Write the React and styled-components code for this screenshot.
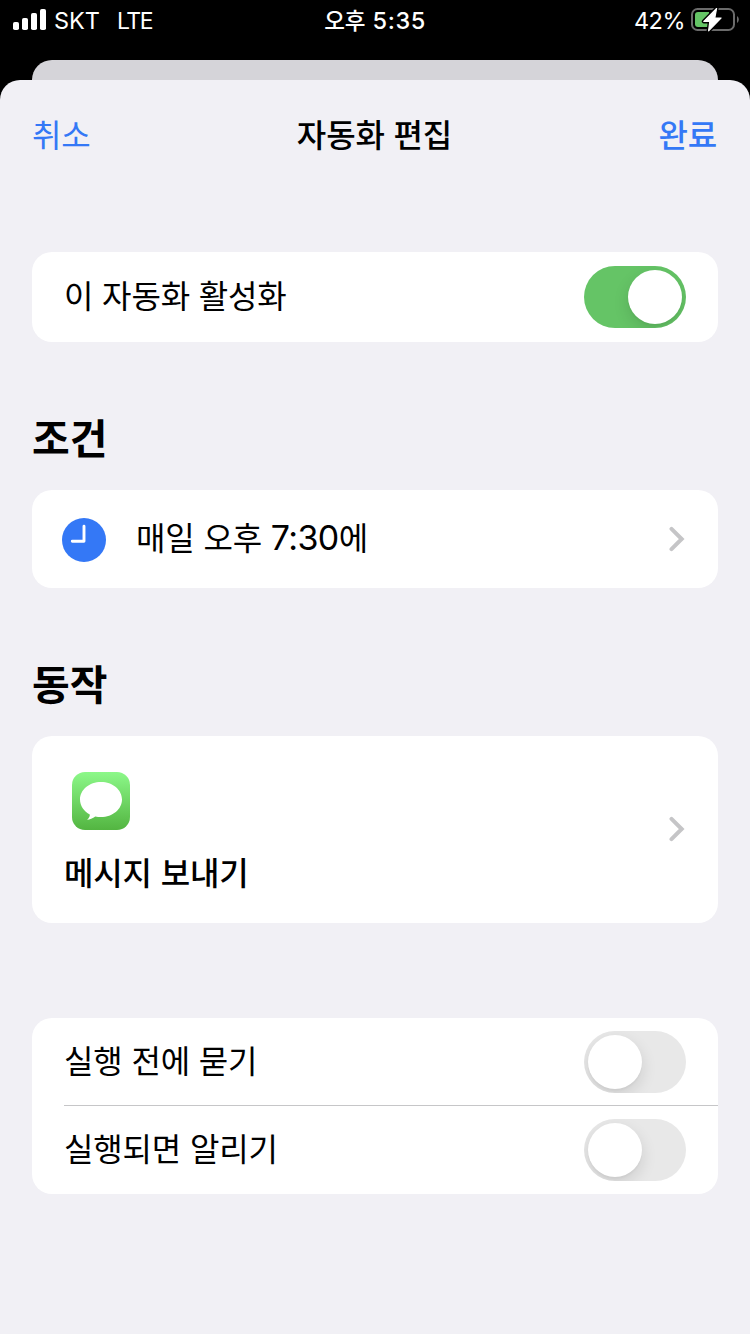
import { useState } from "react";
import styled, { createGlobalStyle, ThemeProvider } from "styled-components";

const theme = {
  colors: {
    blue: "#3478f6",
    green: "#65c466",
    background: "#f1f0f5",
    behind: "#d5d4d9",
    chevron: "#c5c5c7",
    separator: "#c6c6c8",
    track: "#e8e8e8",
  },
  fonts: {
    korean: `"Noto Sans CJK KR", sans-serif`,
    latin: `Inter, "Noto Sans CJK KR", sans-serif`,
  },
};

export default function App() {
  const [enabled, setEnabled] = useState(true);
  const [askBefore, setAskBefore] = useState(false);
  const [notify, setNotify] = useState(false);

  return (
    <ThemeProvider theme={theme}>
      <GlobalStyle />
      <Screen lang="ko">
        <StatusBar>
          <Carrier>
            <SignalIcon />
            <span>SKT</span>
            <Network>LTE</Network>
          </Carrier>
          <Clock>
            <ClockPeriod>오후</ClockPeriod>5:35
          </Clock>
          <Battery>
            <Percent>42%</Percent>
            <BatteryIcon />
          </Battery>
        </StatusBar>
        <BackSheet />
        <Sheet>
          <NavBar>
            <NavButton>취소</NavButton>
            <NavTitle>자동화 편집</NavTitle>
            <NavButton $bold>완료</NavButton>
          </NavBar>
          <Card>
            <Row $height={90}>
              <Label>이 자동화 활성화</Label>
              <Toggle checked={enabled} onChange={setEnabled} />
            </Row>
          </Card>

          <SectionTitle>조건</SectionTitle>
          <Card>
            <Row $height={98} $left={30}>
              <ClockIcon />
              <Label>
                매일 오후 <Digits>7:30</Digits>에
              </Label>
              <Chevron />
            </Row>
          </Card>

          <SectionTitle>동작</SectionTitle>
          <Card>
            <Row $height={187}>
              <Action>
                <MessagesIcon />
                <ActionName>메시지 보내기</ActionName>
              </Action>
              <Chevron />
            </Row>
          </Card>

          <Options>
            <Row $height={87}>
              <Label>실행 전에 묻기</Label>
              <Toggle checked={askBefore} onChange={setAskBefore} />
            </Row>
            <Separator />
            <Row $height={88}>
              <Label>실행되면 알리기</Label>
              <Toggle checked={notify} onChange={setNotify} />
            </Row>
          </Options>
        </Sheet>
      </Screen>
    </ThemeProvider>
  );
}

function Toggle({ checked, onChange }) {
  return (
    <Track type="button" role="switch" aria-checked={checked} $on={checked} onClick={() => onChange(!checked)}>
      <Knob />
    </Track>
  );
}

function SignalIcon() {
  return (
    <SignalSvg width="33" height="21" viewBox="0 0 33 21" fill="#fff">
      <rect x="0" y="13" width="6" height="8" rx="1.8" />
      <rect x="9" y="9" width="6" height="12" rx="1.8" />
      <rect x="18" y="4" width="6" height="17" rx="1.8" />
      <rect x="27" y="0" width="6" height="21" rx="1.8" />
    </SignalSvg>
  );
}

function BatteryIcon() {
  const bolt = "M25.6 0.4L12.8 13.4H18.8L17.6 22.8L30 10H23.800Z";
  return (
    <svg width="48" height="24" viewBox="0 0 48 24" fill="none">
      <rect x="1" y="1" width="42" height="21" rx="5.6" stroke="#6b6b6b" strokeWidth="2" />
      <path d="M46 8C48.400 9.500 48.400 13.500 46 15Z" fill="#6b6b6b" />
      <path d="M7 4H18V19H7A3 3 0 0 1 4 16V7A3 3 0 0 1 7 4Z" fill="#65c466" />
      <path d={bolt} fill="#000" stroke="#000" strokeWidth="4" strokeLinejoin="round" />
      <path d={bolt} fill="#fff" stroke="#fff" strokeWidth="1.200" strokeLinejoin="round" />
    </svg>
  );
}

function ClockIcon() {
  return (
    <ClockSvg width="44" height="44" viewBox="0 0 44 44" fill="none">
      <circle cx="22" cy="22" r="22" fill="#3478f6" />
      <path d="M22 8.300V23.300H10.300" stroke="#fff" strokeWidth="2.900" strokeLinecap="round" strokeLinejoin="round" />
    </ClockSvg>
  );
}

function MessagesIcon() {
  return (
    <MessagesSvg width="58" height="58" viewBox="0 0 58 58">
      <defs>
        <linearGradient id="messages" x1="0" y1="0" x2="0" y2="1">
          <stop offset="0" stopColor="#8cf889" />
          <stop offset="1" stopColor="#53b541" />
        </linearGradient>
      </defs>
      <rect width="58" height="58" rx="13" fill="url(#messages)" />
      <path
        d="M29 10C17.400 10 8 17.700 8 27.500C8 33.800 12 39.300 17.800 42.400C18 44.300 16.800 46.300 15 47.700C17.800 47.700 20.700 46.300 23.300 44.500C25.100 44.900 27 45 29 45C40.600 45 50 37.300 50 27.500C50 17.700 40.600 10 29 10Z"
        fill="#fff"
      />
    </MessagesSvg>
  );
}

function Chevron() {
  return (
    <ChevronSvg width="16" height="26" viewBox="0 0 16 26" fill="none">
      <path d="M2.500 2.800L12.700 13L2.500 23.200" stroke="#c5c5c7" strokeWidth="4" strokeLinecap="round" strokeLinejoin="miter" />
    </ChevronSvg>
  );
}

const GlobalStyle = createGlobalStyle`
  * {
    box-sizing: border-box;
  }

  body {
    margin: 0;
    background: #000;
  }

  button {
    border: none;
    padding: 0;
    background: none;
    font: inherit;
    letter-spacing: inherit;
    cursor: pointer;
  }

  svg {
    display: block;
    flex-shrink: 0;
  }
`;

const Screen = styled.div`
  display: flex;
  flex-direction: column;
  width: 750px;
  height: 1334px;
  overflow: hidden;
  background: #000;
  color: #000;
  font-family: ${({ theme }) => theme.fonts.korean};
  letter-spacing: -0.15px;
  white-space: nowrap;
`;

const StatusBar = styled.header`
  display: grid;
  grid-template-columns: 1fr auto 1fr;
  align-items: center;
  height: 40px;
  padding: 0 11px 0 13px;
  color: #fff;
  font-family: ${({ theme }) => theme.fonts.latin};
  font-size: 23.500px;
  letter-spacing: 0;
  line-height: 38px;

  span {
    padding-top: 2px;
  }
`;

const Carrier = styled.div`
  display: flex;
  align-items: center;
  gap: 8px;
`;

const SignalSvg = styled.svg`
  margin-top: -1px;
`;

const Network = styled.span`
  margin-left: 9px;
  font-size: 23px;
  letter-spacing: -1.5px;
`;

const Clock = styled.div`
  padding: 2px 2px 0 0;
  font-weight: 500;
  letter-spacing: 0.6px;
`;

const ClockPeriod = styled.span`
  margin-right: 7px;
  font-size: 22.500px;
  letter-spacing: 0;
`;

const Battery = styled.div`
  display: flex;
  justify-content: flex-end;
  align-items: center;
  gap: 6px;
`;

const Percent = styled.span`
  letter-spacing: -0.5px;
`;

const BackSheet = styled.div`
  height: 20px;
  margin: 20px 32px 0;
  border-radius: 20px 20px 0 0;
  background: ${({ theme }) => theme.colors.behind};
`;

const Sheet = styled.main`
  flex: 1;
  padding: 0 32px;
  border-radius: 20px 20px 0 0;
  background: ${({ theme }) => theme.colors.background};
`;

const NavBar = styled.nav`
  display: grid;
  grid-template-columns: 1fr auto 1fr;
  align-items: center;
  height: 112px;
  margin-bottom: 60px;
  padding-bottom: 7px;
  font-size: 32px;
`;

const NavButton = styled.button`
  justify-self: ${({ $bold }) => ($bold ? "end" : "start")};
  margin: ${({ $bold }) => ($bold ? "0 1px 0 0" : "0")};
  color: ${({ theme }) => theme.colors.blue};
  font-weight: ${({ $bold }) => ($bold ? 500 : 400)};
`;

const NavTitle = styled.h1`
  margin: 0 1px 0 0;
  font-size: 32px;
  font-weight: 500;
`;

const Card = styled.section`
  border-radius: 20px;
  background: #fff;
`;

const Options = styled(Card)`
  margin-top: 95px;
`;

const Row = styled.div`
  display: flex;
  align-items: center;
  height: ${({ $height }) => $height}px;
  padding: 0 32px 0 ${({ $left = 32 }) => $left}px;
`;

const Label = styled.span`
  flex: 1;
  padding-bottom: 6px;
  font-size: 32px;
  line-height: 48px;
`;

const Digits = styled.span`
  font-family: ${({ theme }) => theme.fonts.latin};
  font-size: 34px;
  letter-spacing: -0.6px;
  line-height: 1;
`;

const SectionTitle = styled.h2`
  height: 60px;
  margin: 64px 0 24px;
  font-size: 41px;
  font-weight: 700;
  letter-spacing: 0;
  line-height: 60px;
`;

const Separator = styled.hr`
  height: 1px;
  margin: 0 0 0 32px;
  border: none;
  background: ${({ theme }) => theme.colors.separator};
`;

const Action = styled.div`
  flex: 1;
`;

const ActionName = styled.div`
  margin-top: 17px;
  font-size: 32px;
  font-weight: 500;
  line-height: 48px;
`;

const Track = styled.button`
  display: flex;
  justify-content: ${({ $on }) => ($on ? "flex-end" : "flex-start")};
  width: 102px;
  height: 62px;
  padding: 4px;
  border-radius: 31px;
  overflow: hidden;
  background: ${({ $on, theme }) => ($on ? theme.colors.green : theme.colors.track)};
`;

const Knob = styled.span`
  width: 54px;
  height: 54px;
  border-radius: 50%;
  background: #fff;
  box-shadow: 0 6px 16px rgba(0, 0, 0, 0.12), 0 2px 2px rgba(0, 0, 0, 0.03);
`;

const ClockSvg = styled.svg`
  margin: 2px 30px 0 0;
`;

const MessagesSvg = styled.svg`
  margin: 7px 0 0 8px;
`;

const ChevronSvg = styled.svg`
  margin: 0 1px 1px 0;
`;
